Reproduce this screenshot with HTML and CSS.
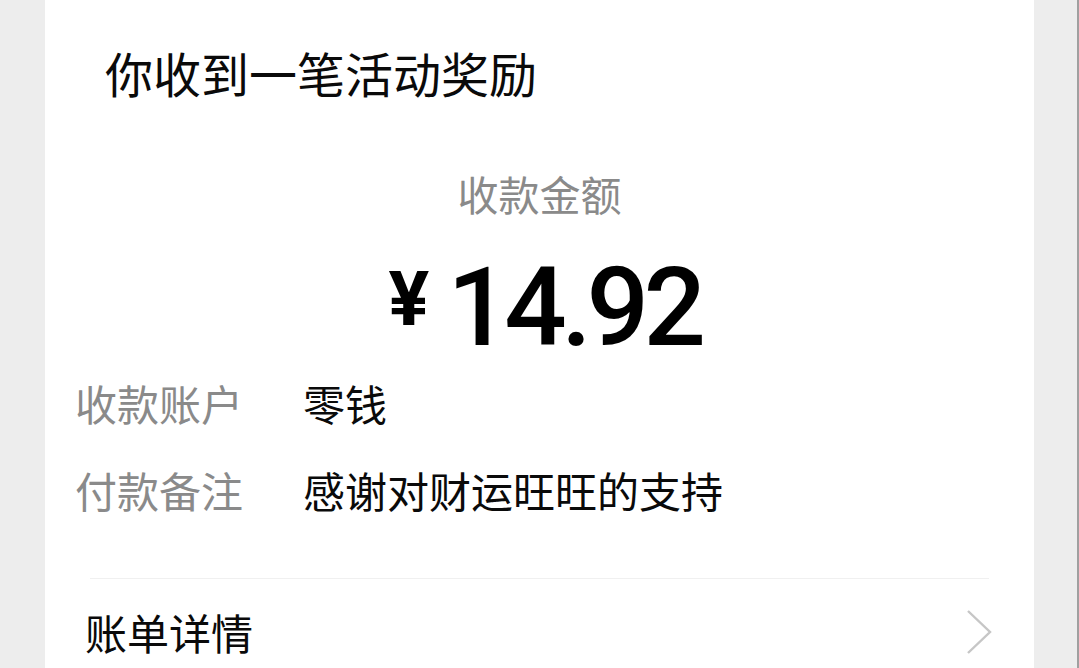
FILE: index.html
```html
<!DOCTYPE html>
<html lang="zh-CN">
<head>
<meta charset="utf-8">
<title>收款</title>
<link rel="stylesheet" href="styles.css">
</head>
<body>
<div class="page">
  <main class="card">
    <h1 class="title">你收到一笔活动奖励</h1>
    <div class="amount-label">收款金额</div>
    <div class="amount"><span class="yen">¥</span><span class="num">14.92</span></div>
    <div class="rows">
      <div class="row"><span class="label">收款账户</span><span class="value">零钱</span></div>
      <div class="row"><span class="label">付款备注</span><span class="value">感谢对财运旺旺的支持</span></div>
    </div>
    <div class="divider"></div>
    <div class="bill">
      <span class="bill-text">账单详情</span>
      <svg class="chev" width="28" height="46" viewBox="0 0 28 46" aria-hidden="true"><polyline points="3,2 25,23 3,44" fill="none" stroke="#c6c6c6" stroke-width="2.4"/></svg>
    </div>
  </main>
  <div class="side"></div>
</div>
</body>
</html>
```
FILE: styles.css
```css
html, body {
  margin: 0;
  padding: 0;
  height: 100%;
}
body {
  background: #ededed;
  font-family: "Noto Sans CJK SC", "Noto Sans", sans-serif;
  color: #111;
  overflow: hidden;
}
.page {
  display: flex;
  height: 668px;
  padding-left: 45px;
}
.card {
  width: 989px;
  flex: none;
  background: #fff;
  padding-top: 42px;
  box-sizing: border-box;
  display: flex;
  flex-direction: column;
}
.side {
  flex: 1;
  border-right: 2px solid #a0a0a0;
}
.title {
  margin: 0;
  padding-left: 60px;
  font-size: 48px;
  font-weight: 400;
  line-height: 60px;
  color: #0a0a0a;
}
.amount-label {
  margin-top: 66px;
  text-align: center;
  font-size: 41px;
  line-height: 50px;
  color: #8a8a8a;
}
.amount {
  margin-top: 30px;
  text-align: center;
  height: 120px;
  line-height: 120px;
  padding-left: 10px;
  font-family: "Roboto", "Noto Sans", sans-serif;
  color: #000;
}
.yen {
  font-size: 76px;
  font-weight: 700;
  margin-right: 18px;
  vertical-align: 20px;
  line-height: 1;
}
.num {
  font-size: 110px;
  font-weight: 500;
  letter-spacing: -5.5px;
}
.rows {
  margin-top: 5px;
  padding-left: 30px;
  display: flex;
  flex-direction: column;
  gap: 27px;
}
.row {
  display: flex;
  font-size: 42px;
  line-height: 60px;
}
.label {
  width: 228px;
  color: #8a8a8a;
}
.value {
  color: #0a0a0a;
}
.divider {
  margin: 58px 45px 0 45px;
  height: 1px;
  background: #f0f0f0;
}
.bill {
  margin-top: 23px;
  padding: 0 41px 0 40px;
  display: flex;
  justify-content: space-between;
  align-items: center;
  height: 60px;
}
.bill-text {
  font-size: 42px;
  line-height: 60px;
  color: #0a0a0a;
}
.chev {
  display: block;
}
```
